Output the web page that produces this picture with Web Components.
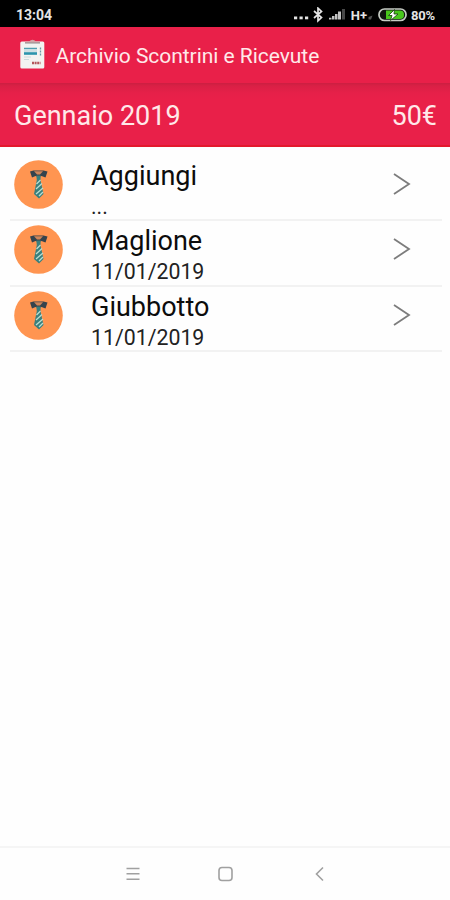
<!DOCTYPE html>
<html lang="it">
<head>
<meta charset="utf-8">
<title>Archivio Scontrini e Ricevute</title>
<style>
  body {
    margin: 0;
    background: #fefefe;
    font-family: Roboto, sans-serif;
  }
</style>
</head>
<body>
<receipt-app>
  <status-bar slot="top" time="13:04" battery="80%"></status-bar>
  <app-bar slot="top">Archivio Scontrini e Ricevute</app-bar>
  <month-header slot="top" total="50€">Gennaio 2019</month-header>
  <receipt-item>Aggiungi<span slot="date">...</span></receipt-item>
  <receipt-item>Maglione<span slot="date">11/01/2019</span></receipt-item>
  <receipt-item>Giubbotto<span slot="date">11/01/2019</span></receipt-item>
  <nav-buttons slot="bottom"></nav-buttons>
</receipt-app>

<script>
class BaseElement extends HTMLElement {
  constructor() {
    super();
    const template = document.createElement("template");
    template.innerHTML = this.render();
    this.attachShadow({ mode: "open" }).append(template.content.cloneNode(true));
  }
}

class ReceiptApp extends BaseElement {
  render() {
    return /*html*/ `
      <style>
        :host {
          display: flex;
          flex-direction: column;
          height: 900px;
          overflow: hidden;
        }
        main {
          flex: 1;
          padding: 9px 8px 0 10px;
        }
      </style>
      <slot name="top"></slot>
      <main><slot></slot></main>
      <slot name="bottom"></slot>
    `;
  }
}

class StatusBar extends BaseElement {
  render() {
    return /*html*/ `
      <style>
        :host {
          display: flex;
          justify-content: space-between;
          align-items: center;
          box-sizing: border-box;
          height: 27px;
          padding: 3px 14px 0 16px;
          background: #000;
          color: #e4e4e4;
          font-size: 14px;
          font-weight: 700;
        }
        .icons {
          display: flex;
          align-items: center;
        }
        .net {
          margin-left: 5px;
          font-size: 13px;
        }
        .level {
          width: 25px;
          font-size: 13px;
          letter-spacing: -0.2px;
          margin-left: 4px;
        }
        svg { display: block; }
      </style>
      <span>${this.getAttribute("time")}</span>
      <div class="icons">
        <svg width="53" height="16" viewBox="0 0 53 16">
          <g fill="#e4e4e4">
            <rect x="1" y="9.500" width="3.200" height="2.800"/>
            <rect x="6.500" y="9.500" width="3.200" height="2.800"/>
            <rect x="12" y="9.500" width="3.200" height="2.800"/>
            <path d="M36 12.500V10.700H38.500V12.500zM39 12.500V9H41.500V12.500zM42 12.500V7H44.500V12.500zM45 12.500V4.500H48V12.500z" fill="#c4c4c4"/>
            <path d="M49 12.500V2H52V12.500z" fill="#484848"/>
          </g>
          <path d="M21 4L28.500 10.500L25 13.800V1.200L28.500 4.500L21 11" fill="none" stroke="#e4e4e4" stroke-width="1.700"/>
        </svg>
        <span class="net">H+</span>
        <svg width="11" height="14" viewBox="0 0 11 14">
          <path d="M1.500 11.500V9L5.500 7.500L4 11.500z" fill="#555"/>
        </svg>
        <svg width="29" height="14" viewBox="0 0 29 14">
          <rect x="1" y="1" width="27" height="11.500" rx="5.500" fill="#101510" stroke="#c6cbc4" stroke-width="1.700"/>
          <path d="M8 2.500H22Q26 2.500 26 6.700Q26 11 22 11H8z" fill="#48c61c"/>
          <path d="M16.500 1.500L10.500 7.500H14L12.500 12.500L20 6H16z" fill="#fff" stroke="#173b0d" stroke-width=".8"/>
        </svg>
        <span class="level">${this.getAttribute("battery")}</span>
      </div>
    `;
  }
}

class AppBar extends BaseElement {
  render() {
    return /*html*/ `
      <style>
        :host {
          display: flex;
          align-items: center;
          box-sizing: border-box;
          height: 56px;
          padding: 2px 0 0 19px;
          gap: 9.5px;
          background: #e92049;
          color: #ffe9e9;
          font-size: 21px;
          letter-spacing: -0.04px;
          white-space: nowrap;
        }
        svg {
          flex: none;
          margin-bottom: 3px;
        }
      </style>
      <svg width="27" height="31" viewBox="0 0 27 31">
        <rect x="1.300" y="2.500" width="24" height="27" rx="1.500" fill="#f3f3f1"/>
        <path d="M6 4V2.500H10Q13.500 -1 17 2.500H21V4z" fill="#d3a6a8"/>
        <path d="M6 4H21" stroke="#8e8a8c"/>
        <path d="M5 9.500H18" stroke="#4f9eb0" stroke-width="1.500"/>
        <path d="M5 12H18" stroke="#a9cdd5"/>
        <path d="M5 14.500H18" stroke="#2b94ad" stroke-width="2.600"/>
        <path d="M5 18H12M5 20.500H10" stroke="#c9dadd"/>
        <path d="M21.500 8.500V16.500" stroke="#6a9aa6" stroke-width="1.300" stroke-dasharray="2 1"/>
        <path d="M13 24H21.500" stroke="#b3575c" stroke-width="2.400" stroke-dasharray="2 .6"/>
      </svg>
      <slot></slot>
    `;
  }
}

class MonthHeader extends BaseElement {
  render() {
    return /*html*/ `
      <style>
        :host {
          display: flex;
          justify-content: space-between;
          align-items: center;
          box-sizing: border-box;
          height: 64px;
          padding: 4px 13px 0 14px;
          background: linear-gradient(#cc1f41, #da2045 3px, #e62049 10px, #e92049 16px);
          border-bottom: 2px solid #e3182c;
          color: #ffe9e9;
          font-size: 27px;
        }
      </style>
      <slot></slot>
      <span>${this.getAttribute("total")}</span>
    `;
  }
}

class ReceiptItem extends BaseElement {
  render() {
    return /*html*/ `
      <style>
        :host {
          display: grid;
          grid-template-columns: 81px 1fr 18px;
          box-sizing: border-box;
          height: 65.3px;
          padding-right: 31px;
          border-bottom: 2px solid #f2f2f2;
          color: #0c0c0c;
        }
        .badge { margin: 4px 0 0 4px; }
        .name {
          height: 37px;
          font-size: 27px;
          line-height: 41px;
        }
        .date {
          font-size: 21.3px;
          line-height: 28px;
          color: #222;
        }
        .arrow { margin-top: 17px; }
      </style>
      <svg class="badge" width="49" height="49" viewBox="0 0 49 49">
        <circle cx="24.500" cy="24.500" r="24.300" fill="#ff9551"/>
        <path d="M16 11.500L19.500 10.500H29.500L33.500 11.500L31.500 17.500L27.500 16L24.500 17L21.500 16L18 17.500z" fill="#34434d"/>
        <path d="M20 11.300H29L26 14.500H23z" fill="#d08558"/>
        <path d="M22.300 15.500H26.700L26.500 20L29.500 34L25 38.500L20 34L22.800 20z" fill="#397f7d"/>
        <path d="M22.500 24L26.500 20M22 29L28 23.500M22 34L29 28M25 36L29 32" stroke="#b9ddd0" stroke-width="1.300"/>
      </svg>
      <div>
        <div class="name"><slot></slot></div>
        <div class="date"><slot name="date"></slot></div>
      </div>
      <svg class="arrow" width="18" height="22" viewBox="0 0 18 22">
        <path d="M1 1L16 11L1 21" fill="none" stroke="#7c7c7c" stroke-width="1.800"/>
      </svg>
    `;
  }
}

class NavButtons extends BaseElement {
  render() {
    return /*html*/ `
      <style>
        :host {
          display: grid;
          grid-template-columns: 91px 98px 9px;
          align-items: center;
          box-sizing: border-box;
          height: 54px;
          padding-left: 126px;
          border-top: 2px solid #f5f5f5;
        }
        svg {
          fill: none;
          stroke: #a0a0a0;
          stroke-width: 1.6;
        }
      </style>
      <svg width="14" height="16" viewBox="0 0 14 16">
        <path d="M.5 2.500H13.500M.5 7.800H13.500M.5 13.300H13.500"/>
      </svg>
      <svg width="16" height="16" viewBox="0 0 16 16">
        <rect x="2" y="1.500" width="13" height="13" rx="3"/>
      </svg>
      <svg width="9" height="16" viewBox="0 0 9 16">
        <path d="M8 1.500L1.500 8L8 14.500"/>
      </svg>
    `;
  }
}

customElements.define("receipt-app", ReceiptApp);
customElements.define("status-bar", StatusBar);
customElements.define("app-bar", AppBar);
customElements.define("month-header", MonthHeader);
customElements.define("receipt-item", ReceiptItem);
customElements.define("nav-buttons", NavButtons);
</script>
</body>
</html>
